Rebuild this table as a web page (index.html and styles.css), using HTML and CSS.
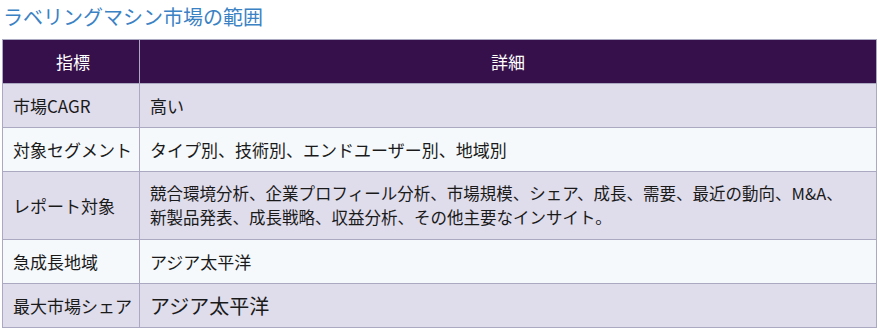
FILE: index.html
```html
<!DOCTYPE html>
<html lang="ja">
<head>
<meta charset="utf-8">
<link rel="stylesheet" href="styles.css">
</head>
<body>
<h2 class="title">ラベリングマシン市場の範囲</h2>
<table class="scope">
  <thead>
    <tr><th class="col-key">指標</th><th>詳細</th></tr>
  </thead>
  <tbody>
    <tr class="odd"><td class="key">市場CAGR</td><td>高い</td></tr>
    <tr class="even"><td class="key">対象セグメント</td><td>タイプ別、技術別、エンドユーザー別、地域別</td></tr>
    <tr class="odd"><td class="key">レポート対象</td><td class="long">競合環境分析、企業プロフィール分析、市場規模、シェア、成長、需要、最近の動向、M&amp;A、<br>新製品発表、成長戦略、収益分析、その他主要なインサイト。</td></tr>
    <tr class="even"><td class="key">急成長地域</td><td>アジア太平洋</td></tr>
    <tr class="odd"><td class="key">最大市場シェア</td><td class="big">アジア太平洋</td></tr>
  </tbody>
</table>
</body>
</html>
```
FILE: styles.css
```css
body {
  margin: 0;
  padding: 0 0 0 2px;
  background: #ffffff;
  font-family: "Noto Sans CJK JP", "Noto Sans", sans-serif;
  color: #1a1a1a;
}
.title {
  margin: 0;
  padding: 3px 0 0 1px;
  height: 35px;
  box-sizing: border-box;
  font-size: 20px;
  font-weight: 400;
  line-height: 27px;
  color: #3b82c4;
}
.scope {
  width: 875px;
  border-collapse: collapse;
  font-size: 17px;
  margin-top: 4px;
}
.scope th, .scope td {
  border: 1px solid #aba8c2;
  line-height: 23px;
  padding: 10px 10px;
  text-align: left;
  font-weight: 400;
}
.scope th {
  background: #36104a;
  color: #ffffff;
  text-align: center;
  border-color: #aba8c2;
}
.scope th.col-key {
  width: 120px;
  padding: 10px 6px 10px 10px;
}
.scope td.key {
  white-space: nowrap;
  padding-right: 6px;
}
.odd td {
  background: #dfdceb;
}
.even td {
  background: #f5f9fc;
}
.scope td.long {
  white-space: nowrap;
  font-size: 16.5px;
  line-height: 23.5px;
}
.scope td.big {
  font-size: 20px;
  padding-top: 9px;
  padding-bottom: 9px;
}
```
